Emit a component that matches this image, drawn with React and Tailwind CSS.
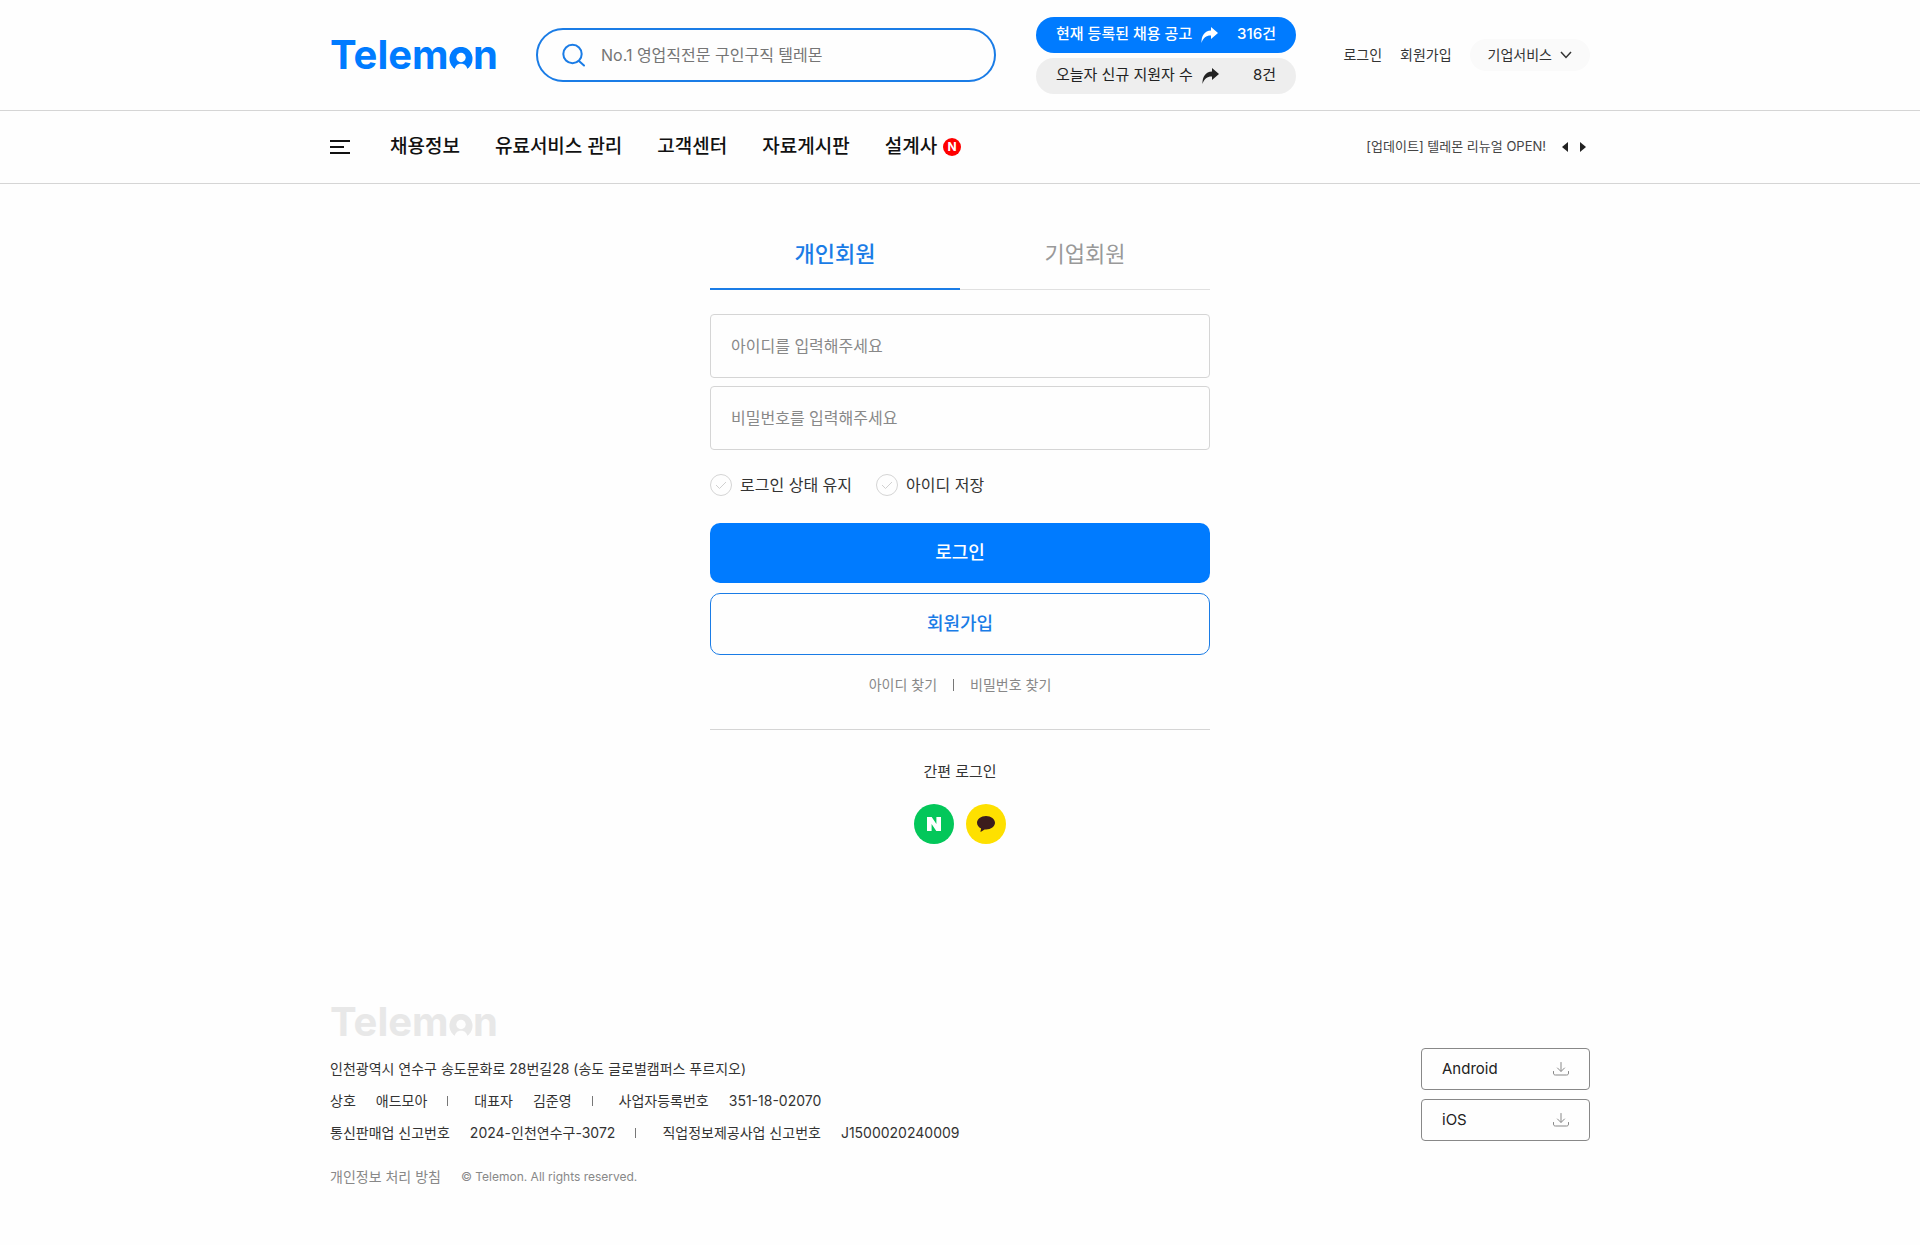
import { useState } from 'react';

const NAV = ['채용정보', '유료서비스 관리', '고객센터', '자료게시판'];

const TABS = ['개인회원', '기업회원'];

const COMPANY = [
  [
    ['상호', '애드모아'],
    ['대표자', '김준영'],
    ['사업자등록번호', '351-18-02070'],
  ],
  [
    ['통신판매업 신고번호', '2024-인천연수구-3072'],
    ['직업정보제공사업 신고번호', 'J1500020240009'],
  ],
];

function SearchIcon() {
  return (
    <svg width="23" height="24" viewBox="0 0 23 24" fill="none" stroke="#1a7ce6" strokeWidth="2">
      <circle cx="10.5" cy="11" r="9.2" />
      <path d="M17 18L22 22.5" strokeLinecap="round" />
    </svg>
  );
}

function ShareIcon() {
  return (
    <svg width="17" height="16" viewBox="0 0 17 16" fill="currentColor">
      <path d="M10 0L17 6L10 12V8.6C5.5 8.4 2.5 10.5 0.5 16C0.3 8.5 3.5 3.8 10 3.4Z" />
    </svg>
  );
}

function DownloadIcon() {
  return (
    <svg width="16" height="14" viewBox="0 0 16 14" fill="none" stroke="#888" strokeLinecap="round" strokeLinejoin="round">
      <path d="M8 0.5V9M4.5 6L8 9.5L11.5 6" />
      <path d="M0.5 9.5V11C0.5 12.5 1.2 13 2.5 13H13.5C14.8 13 15.5 12.5 15.5 11V9.5" />
    </svg>
  );
}

// the "o" carries a small person: head in the counter, shoulders cut from the bottom
function Logo({ className }) {
  return (
    <div className={`text-[40px] leading-[42px] font-bold ${className}`}>
      Telem
      <span className="relative">
        o
        <svg className="absolute bottom-2 left-1/2 -translate-x-1/2" width="24" height="24" viewBox="0 0 24 24">
          <circle cx="12" cy="12" r="11.5" fill="currentColor" />
          <circle cx="12" cy="10.5" r="4.7" fill="#fefefe" />
          <path d="M5.5 24C5.5 19.4 8 16.8 12 16.8S18.5 19.4 18.5 24Z" fill="#fefefe" />
        </svg>
      </span>
      n
    </div>
  );
}

function CountPill({ label, count, className }) {
  return (
    <a href="#" className={`flex h-9 w-65 items-center rounded-full px-5 text-[15px] ${className}`}>
      <span className="mr-[9px]">{label}</span>
      <ShareIcon />
      <span className="ml-auto">{count}건</span>
    </a>
  );
}

function Check({ id, label }) {
  return (
    <label htmlFor={id} className="flex h-[22px] items-center gap-2 text-base text-[#333]">
      <span className="relative flex size-[22px] items-center justify-center">
        <input id={id} type="checkbox" className="peer absolute inset-0 appearance-none rounded-full border border-[#d5d5d5] checked:border-[#007bff]" />
        <svg className="text-[#d0d0d0] peer-checked:text-[#007bff]" width="12" height="9" viewBox="0 0 12 9" fill="none" stroke="currentColor">
          <path d="M1 4L4.5 7.5L11 1" />
        </svg>
      </span>
      {label}
    </label>
  );
}

function StoreLink({ label }) {
  return (
    <a href="#" className="flex h-[42px] w-[169px] items-center justify-between rounded border border-[#888] px-5 text-[15px] text-[#222]">
      {label}
      <DownloadIcon />
    </a>
  );
}

function Header() {
  return (
    <header>
      <div className="border-b border-[#d5d5d5]">
        <div className="mx-auto flex h-[110px] max-w-[1260px] items-center">
          <a href="#" className="w-[206px]" aria-label="Telemon">
            <Logo className="text-[#007bff]" />
          </a>
          <form className="flex h-[54px] w-[460px] items-center gap-4 rounded-full border-2 border-[#1a7ce6] px-6">
            <SearchIcon />
            <input
              type="search"
              aria-label="검색"
              placeholder="No.1 영업직전문 구인구직 텔레몬"
              className="min-w-0 flex-1 text-base outline-none placeholder:text-[#757575]"
            />
          </form>
          <div className="ml-10 flex flex-col gap-[5px]">
            <CountPill label="현재 등록된 채용 공고" count={316} className="bg-[#007bff] font-medium text-white" />
            <CountPill label="오늘자 신규 지원자 수" count={8} className="bg-[#eee] text-[#222]" />
          </div>
          <div className="ml-auto flex items-center gap-[18px] text-sm text-[#333]">
            <a href="#">로그인</a>
            <a href="#">회원가입</a>
            <button type="button" className="flex h-8 items-center gap-2 rounded-full bg-[#fafafa] px-[18px]">
              기업서비스
              <svg width="12" height="8" viewBox="0 0 12 8" fill="none" stroke="#333" strokeWidth="1.5">
                <path d="M1 1L6 6.5L11 1" />
              </svg>
            </button>
          </div>
        </div>
      </div>
      <div className="border-b border-[#d5d5d5]">
        <div className="mx-auto flex h-[72px] max-w-[1260px] items-center">
          <button type="button" aria-label="전체 메뉴" className="mr-10">
            <svg width="20" height="14" viewBox="0 0 20 14" fill="none" stroke="#111" strokeWidth="2">
              <path d="M0 1H20M0 7H14M0 13H20" />
            </svg>
          </button>
          <nav className="flex items-center gap-[35px] text-[19px] font-medium text-[#111]">
            {NAV.map((item) => (
              <a key={item} href="#">{item}</a>
            ))}
            <a href="#" className="flex items-center gap-1.5">
              설계사
              <span className="flex size-[18px] items-center justify-center rounded-full bg-[#f00] text-xs font-bold text-white">N</span>
            </a>
          </nav>
          <div className="ml-auto flex items-center text-[13px] text-[#444]">
            <a href="#" className="mr-4">[업데이트] 텔레몬 리뉴얼 OPEN!</a>
            <button type="button" aria-label="이전" className="mr-3">
              <svg width="6" height="10" viewBox="0 0 6 10" fill="#222"><path d="M6 0V10L0 5Z" /></svg>
            </button>
            <button type="button" aria-label="다음" className="mr-1">
              <svg width="6" height="10" viewBox="0 0 6 10" fill="#222"><path d="M0 0V10L6 5Z" /></svg>
            </button>
          </div>
        </div>
      </div>
    </header>
  );
}

function LoginForm() {
  const [tab, setTab] = useState(TABS[0]);

  return (
    <main className="mx-auto max-w-[500px] pt-9">
      <div className="grid grid-cols-2">
        {TABS.map((t) => (
          <button
            key={t}
            type="button"
            onClick={() => setTab(t)}
            className={
              t === tab
                ? 'h-[70px] border-b-2 border-[#1a7ce6] text-[22px] font-medium text-[#1a7ce6]'
                : 'h-[70px] border-b border-[#e0e0e0] text-[22px] text-[#999]'
            }
          >
            {t}
          </button>
        ))}
      </div>

      <form>
        <div className="mt-6 flex flex-col gap-2">
          <input
            type="text"
            aria-label="아이디"
            placeholder="아이디를 입력해주세요"
            className="h-16 rounded border border-[#d5d5d5] px-5 text-base placeholder:text-[#888]"
          />
          <input
            type="password"
            aria-label="비밀번호"
            placeholder="비밀번호를 입력해주세요"
            className="h-16 rounded border border-[#d5d5d5] px-5 text-base placeholder:text-[#888]"
          />
        </div>
        <div className="mt-6 flex gap-6">
          <Check id="keep" label="로그인 상태 유지" />
          <Check id="save" label="아이디 저장" />
        </div>
        <button type="submit" className="mt-[27px] h-[60px] w-full rounded-[10px] bg-[#007bff] text-lg font-medium text-white">
          로그인
        </button>
        <button type="button" className="mt-[10px] h-[62px] w-full rounded-[10px] border border-[#1a7ce6] text-lg font-medium text-[#1a7ce6]">
          회원가입
        </button>
      </form>

      <div className="mt-5 flex items-center justify-center gap-4 text-sm leading-5 text-[#888]">
        <a href="#">아이디 찾기</a>
        <span className="h-3 w-px bg-[#777]" />
        <a href="#">비밀번호 찾기</a>
      </div>

      <section className="mt-[34px] border-t border-[#d5d5d5] pt-8 text-center">
        <h2 className="text-[15px] leading-5 text-[#333]">간편 로그인</h2>
        <div className="mt-[22px] flex justify-center gap-3">
          <button type="button" aria-label="네이버 로그인" className="flex size-10 items-center justify-center rounded-full bg-[#03c75a]">
            <svg width="14" height="14" viewBox="0 0 14 14" fill="#fff">
              <path d="M0 0H4.7L9.4 6.9V0H14V14H9.3L4.6 7.1V14H0Z" />
            </svg>
          </button>
          <button type="button" aria-label="카카오 로그인" className="flex size-10 items-center justify-center rounded-full bg-[#fee000]">
            <svg width="18" height="16" viewBox="0 0 18 16" fill="#3b1c1c">
              <path d="M9 0C4 0 0 3 0 6.8C0 9.2 1.6 11.3 4.1 12.5L3.5 15.5C3.5 15.8 3.7 16 4 15.8L7.6 13.4L9 13.5C14 13.5 18 10.5 18 6.8S14 0 9 0Z" />
            </svg>
          </button>
        </div>
      </section>
    </main>
  );
}

function Footer() {
  return (
    <footer className="mx-auto mt-[157px] flex max-w-[1260px] justify-between pb-12">
      <div>
        <Logo className="text-[#e8e8e8]" />
        <div className="mt-[10px] text-sm leading-8 text-[#333]">
          <p>인천광역시 연수구 송도문화로 28번길28 (송도 글로벌캠퍼스 푸르지오)</p>
          {COMPANY.map((row, i) => (
            <dl key={i} className="flex items-center">
              {row.map(([name, value], j) => (
                <div key={name} className="flex items-center">
                  {j > 0 && <span className="mr-[26px] ml-5 h-[10px] w-px bg-[#777]" />}
                  <dt className="mr-5">{name}</dt>
                  <dd>{value}</dd>
                </div>
              ))}
            </dl>
          ))}
        </div>
        <div className="mt-3 flex items-center gap-5 text-sm leading-8 text-[#888]">
          <a href="#">개인정보 처리 방침</a>
          <small className="text-xs">© Telemon. All rights reserved.</small>
        </div>
      </div>
      <div className="mt-[47px] flex flex-col gap-[9px]">
        <StoreLink label="Android" />
        <StoreLink label="iOS" />
      </div>
    </footer>
  );
}

export default function App() {
  return (
    <div className="min-h-screen bg-[#fefefe] font-['Inter','Noto_Sans_CJK_KR',sans-serif]">
      <Header />
      <LoginForm />
      <Footer />
    </div>
  );
}
